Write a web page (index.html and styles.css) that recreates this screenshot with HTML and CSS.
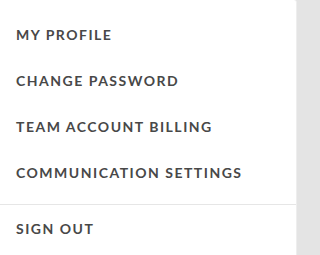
FILE: index.html
```html
<!DOCTYPE html>
<html>
<head>
<meta charset="utf-8">
<link rel="stylesheet" href="styles.css">
</head>
<body>
<div class="page">
  <nav class="menu">
    <ul class="group">
      <li class="item">MY PROFILE</li>
      <li class="item">CHANGE PASSWORD</li>
      <li class="item">TEAM ACCOUNT BILLING</li>
      <li class="item">COMMUNICATION SETTINGS</li>
    </ul>
    <ul class="group group-last">
      <li class="item">SIGN OUT</li>
    </ul>
  </nav>
</div>
</body>
</html>
```

FILE: styles.css
```css
html, body {
  margin: 0;
  padding: 0;
  background: #e4e4e4;
}
.page {
  width: 300px;
  height: 255px;
  display: flex;
  background: #e4e4e4;
}
.menu {
  width: 297px;
  height: 255px;
  background: #ffffff;
  border-right: 1px solid #eeeeee;
  border-top-right-radius: 3px;
  box-sizing: border-box;
  display: flex;
  flex-direction: column;
}
.group {
  list-style: none;
  margin: 0;
  padding: 11px 0 9px 0;
  border-bottom: 1px solid #e6e6e6;
}
.group-last {
  padding: 0;
  border-bottom: none;
}
.item {
  height: 46px;
  display: flex;
  align-items: center;
  padding-left: 16px;
  font-family: Lato, "Open Sans", sans-serif;
  font-weight: 700;
  font-size: 14px;
  letter-spacing: 1.5px;
  color: #484848;
}
```
